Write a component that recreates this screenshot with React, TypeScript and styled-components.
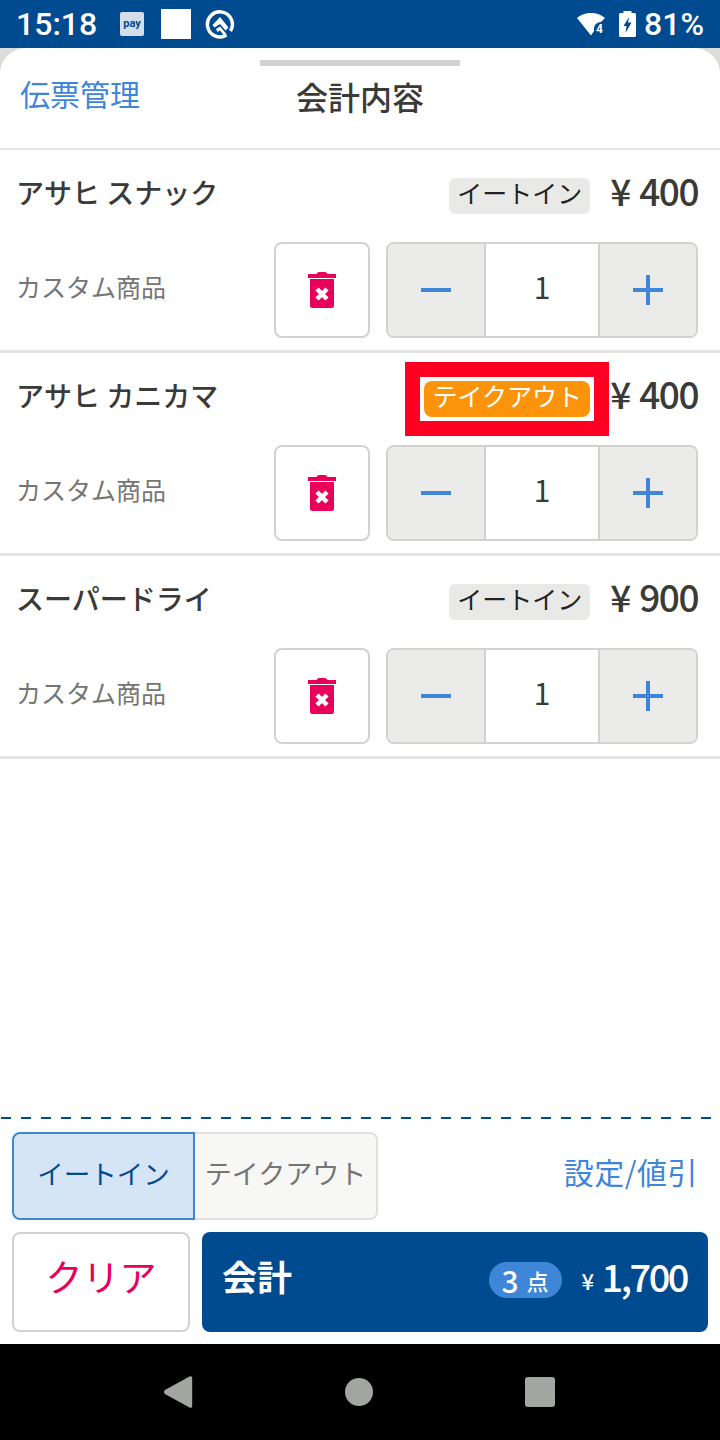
import styled, { createGlobalStyle } from 'styled-components';

const NAVY = '#004a8f';
const BLUE = '#3f85d8';
const PINK = '#e8005a';
const LINE = '#d2d3d1';
const INK = '#3a3a38';

const items = [
  { name: 'アサヒ スナック', type: 'eatin', price: '400' },
  { name: 'アサヒ カニカマ', type: 'takeout', price: '400' },
  { name: 'スーパードライ', type: 'eatin', price: '900' },
];

const GlobalStyle = createGlobalStyle`
  html, body {
    margin: 0;
    padding: 0;
    background: #000;
  }
  * {
    box-sizing: border-box;
  }
`;

const App = () => {
  return (
    <>
      <GlobalStyle />
      <Page>
        <StatusBar>
          <StatusLeft>
            <Clock>15:18</Clock>
            <PayIcon>pay</PayIcon>
            <WhiteSquare />
            <svg width="30" height="30" viewBox="0 0 30 30" fill="none">
              <path d="M21.500 26A12.500 12.500 0 1 1 25.500 22" stroke="#fff" strokeWidth="3.500" />
              <path d="M15 8l8.500 10.500-3 3L15 15l-5.500 3.500L7.500 16z" fill="#fff" />
              <path d="M11 20l4-2.500 6.500 7.500-2.500 1.500-4-5-2.500 1.500z" fill="#fff" />
            </svg>
          </StatusLeft>
          <StatusRight>
            <svg width="30" height="28" viewBox="0 0 30 28">
              <path d="M1 8C5 4.500 9.500 3 15 3s10 1.500 14 5l-4 4c-4 0-7 3-7 7v2l-3 4.500z" fill="#fff" />
              <text x="20" y="22.500" fill="#fff" fontSize="12" fontWeight="700" fontFamily="Roboto, sans-serif">4</text>
            </svg>
            <svg width="17" height="26" viewBox="0 0 17 26">
              <path d="M4.500 0h8v2h3a1.500 1.500 0 0 1 1.500 1.500V24.500a1.500 1.500 0 0 1-1.500 1.500H1.500A1.500 1.500 0 0 1 0 24.500V3.500A1.500 1.500 0 0 1 1.500 2h3z" fill="#fff" />
              <path d="M10 6L4.500 15h3l-1 7 6-10.500H9z" fill={NAVY} />
            </svg>
            <Battery>81%</Battery>
          </StatusRight>
        </StatusBar>
        <Backdrop>
          <Sheet>
            <Handle />
            <Header>
              <BackLink>伝票管理</BackLink>
              <Title>会計内容</Title>
            </Header>
            {items.map((item) => (
              <ItemRow key={item.name}>
                <ItemTop>
                  <ItemName>{item.name}</ItemName>
                  <ItemRight>
                    {item.type === 'takeout' ? (
                      <Highlight>
                        <TakeoutBadge>テイクアウト</TakeoutBadge>
                      </Highlight>
                    ) : (
                      <EatinBadge>イートイン</EatinBadge>
                    )}
                    <Price>
                      <Yen>¥</Yen>
                      {item.price}
                    </Price>
                  </ItemRight>
                </ItemTop>
                <ItemBottom>
                  <ItemNote>カスタム商品</ItemNote>
                  <DeleteButton>
                    <svg width="28" height="36" viewBox="0 0 28 36">
                      <path d="M0 2h8.500C9 .7 10 0 11.500 0h5C18 0 19 .7 19.500 2H28v4H0z" fill={PINK} />
                      <path d="M2 7h24v26.500a2.500 2.500 0 0 1-2.500 2.500h-19A2.500 2.500 0 0 1 2 33.500z" fill={PINK} />
                      <path d="M9 17l10 10M19 17L9 27" stroke="#fff" strokeWidth="4.500" />
                    </svg>
                  </DeleteButton>
                  <Stepper>
                    <StepButton>
                      <svg width="30" height="4" viewBox="0 0 30 4">
                        <rect width="30" height="4" fill={BLUE} />
                      </svg>
                    </StepButton>
                    <Quantity>1</Quantity>
                    <StepButton>
                      <svg width="30" height="30" viewBox="0 0 30 30">
                        <path d="M0 13h30v4H0zM13 0h4v30h-4z" fill={BLUE} />
                      </svg>
                    </StepButton>
                  </Stepper>
                </ItemBottom>
              </ItemRow>
            ))}
            <Spacer />
            <DashedLine />
            <Footer>
              <OptionRow>
                <Segment>
                  <SegmentOn>イートイン</SegmentOn>
                  <SegmentOff>テイクアウト</SegmentOff>
                </Segment>
                <SettingLink>設定/値引</SettingLink>
              </OptionRow>
              <ActionRow>
                <ClearButton>クリア</ClearButton>
                <PayButton>
                  <PayLabel>会計</PayLabel>
                  <PayRight>
                    <CountPill>
                      3<CountUnit>点</CountUnit>
                    </CountPill>
                    <TotalYen>¥</TotalYen>
                    <Total>1,700</Total>
                  </PayRight>
                </PayButton>
              </ActionRow>
            </Footer>
          </Sheet>
        </Backdrop>
        <NavBar>
          <svg width="29" height="32" viewBox="0 0 29 32">
            <path d="M1 14L25.500.6c1.500-.8 2.700 0 2.700 1.500v27.800c0 1.500-1.200 2.300-2.700 1.500L1 18c-1.300-.9-1.300-3.100 0-4z" fill="#a3a5a1" />
          </svg>
          <svg width="28" height="28" viewBox="0 0 28 28">
            <circle cx="14" cy="14" r="14" fill="#a3a5a1" />
          </svg>
          <svg width="30" height="30" viewBox="0 0 30 30">
            <rect width="30" height="30" rx="3" fill="#a3a5a1" />
          </svg>
        </NavBar>
      </Page>
    </>
  );
};

const Page = styled.div`
  width: 720px;
  height: 1440px;
  display: flex;
  flex-direction: column;
  font-family: 'Noto Sans CJK JP', 'Noto Sans', sans-serif;
  overflow: hidden;
`;

const StatusBar = styled.div`
  height: 48px;
  padding: 0 16px;
  display: flex;
  align-items: center;
  justify-content: space-between;
  background: ${NAVY};
  color: #fff;
  font-family: Roboto, sans-serif;
`;

const StatusLeft = styled.div`
  display: flex;
  align-items: center;
`;

const Clock = styled.div`
  width: 104px;
  font-size: 32px;
  font-weight: 500;
  line-height: 48px;
`;

const PayIcon = styled.div`
  width: 24px;
  height: 24px;
  border-radius: 2px;
  background: #d3deea;
  color: ${NAVY};
  font-size: 11px;
  font-weight: 700;
  line-height: 24px;
  text-align: center;
`;

const WhiteSquare = styled.div`
  width: 30px;
  height: 30px;
  margin: 0 14px 0 17px;
  background: #fff;
`;

const StatusRight = styled.div`
  display: flex;
  align-items: center;
  gap: 13px;
`;

const Battery = styled.div`
  margin-left: -5px;
  font-size: 32px;
  font-weight: 500;
  line-height: 48px;
`;

const Backdrop = styled.div`
  height: 1296px;
  background: #dcdcda;
`;

const Sheet = styled.div`
  position: relative;
  height: 100%;
  display: flex;
  flex-direction: column;
  background: #fff;
  border-radius: 26px 26px 0 0;
`;

const Handle = styled.div`
  position: absolute;
  top: 12px;
  left: 260px;
  width: 200px;
  height: 6px;
  background: ${LINE};
`;

const Header = styled.div`
  position: relative;
  height: 102px;
  flex-shrink: 0;
  border-bottom: 2px solid #e4e5e3;
  display: flex;
  justify-content: center;
  padding-top: 25px;
`;

const BackLink = styled.div`
  position: absolute;
  left: 20px;
  top: 23px;
  font-size: 30px;
  line-height: 44px;
  color: ${BLUE};
`;

const Title = styled.div`
  font-size: 32px;
  font-weight: 500;
  line-height: 46px;
  color: ${INK};
`;

const ItemRow = styled.div`
  height: 203px;
  flex-shrink: 0;
  padding: 0 22px 0 16px;
  border-bottom: 3px solid #e4e5e3;
`;

const ItemTop = styled.div`
  height: 92px;
  display: flex;
  align-items: center;
  justify-content: space-between;
`;

const ItemName = styled.div`
  margin-bottom: 8px;
  font-size: 28px;
  font-weight: 500;
  color: ${INK};
  white-space: nowrap;
`;

const ItemRight = styled.div`
  display: flex;
  align-items: center;
  gap: 20px;
`;

const EatinBadge = styled.div`
  height: 36px;
  padding: 0 8px;
  border-radius: 6px;
  background: #e9eae8;
  color: #222;
  font-size: 25px;
  line-height: 29px;
  white-space: nowrap;
`;

const Highlight = styled.div`
  margin: -19px -19px -19px 0;
  padding: 4px;
  background: #fff;
  border: 15px solid #ff0022;
  position: relative;
`;

const TakeoutBadge = styled.div`
  height: 36px;
  width: 166px;
  border-radius: 8px;
  background: #fb940a;
  color: #fff;
  font-size: 25px;
  line-height: 29px;
  text-align: center;
  white-space: nowrap;
`;

const Price = styled.div`
  margin-bottom: 12px;
  display: flex;
  align-items: baseline;
  font-size: 37px;
  font-weight: 500;
  line-height: 48px;
  letter-spacing: -1.5px;
  color: ${INK};
  white-space: nowrap;
`;

const Yen = styled.span`
  width: 29px;
  letter-spacing: 0;
`;

const ItemBottom = styled.div`
  display: flex;
  align-items: center;
`;

const ItemNote = styled.div`
  width: 258px;
  margin-bottom: 8px;
  font-size: 25px;
  color: #757674;
  white-space: nowrap;
`;

const DeleteButton = styled.div`
  width: 96px;
  height: 96px;
  margin-right: 16px;
  display: flex;
  align-items: center;
  justify-content: center;
  border: 2px solid ${LINE};
  border-radius: 8px;
  background: #fff;
`;

const Stepper = styled.div`
  width: 312px;
  height: 96px;
  display: grid;
  grid-template-columns: 96px 1fr 96px;
  border: 2px solid ${LINE};
  border-radius: 8px;
  overflow: hidden;
`;

const StepButton = styled.div`
  display: flex;
  align-items: center;
  justify-content: center;
  background: #ebecea;
`;

const Quantity = styled.div`
  border-left: 2px solid ${LINE};
  border-right: 2px solid ${LINE};
  background: #fff;
  color: ${INK};
  font-size: 30px;
  line-height: 84px;
  text-align: center;
`;

const Spacer = styled.div`
  flex: 1;
`;

const DashedLine = styled.div`
  height: 2px;
  flex-shrink: 0;
  background: repeating-linear-gradient(to right, ${NAVY} 0 10px, transparent 10px 20px) 1px 0;
`;

const Footer = styled.div`
  height: 225px;
  flex-shrink: 0;
  padding: 13px 12px 12px;
  display: flex;
  flex-direction: column;
  gap: 12px;
`;

const OptionRow = styled.div`
  height: 88px;
  display: flex;
  align-items: center;
  justify-content: space-between;
  padding-right: 10px;
`;

const Segment = styled.div`
  width: 366px;
  height: 88px;
  display: flex;
`;

const SegmentOn = styled.div`
  width: 183px;
  border: 2px solid ${BLUE};
  border-radius: 8px 0 0 8px;
  background: #d5e5f5;
  color: ${NAVY};
  font-size: 26.500px;
  line-height: 78px;
  text-align: center;
`;

const SegmentOff = styled.div`
  flex: 1;
  border: 2px solid #e0e1df;
  border-left: 0;
  border-radius: 0 8px 8px 0;
  background: #f7f8f6;
  color: #757674;
  font-size: 27px;
  line-height: 78px;
  text-align: center;
  white-space: nowrap;
`;

const SettingLink = styled.div`
  margin-bottom: 10px;
  font-size: 30px;
  color: ${BLUE};
  letter-spacing: 0.5px;
`;

const ActionRow = styled.div`
  height: 100px;
  display: flex;
  gap: 12px;
`;

const ClearButton = styled.div`
  width: 178px;
  border: 2px solid ${LINE};
  border-radius: 8px;
  background: #fff;
  color: ${PINK};
  font-size: 37px;
  line-height: 84px;
  text-align: center;
`;

const PayButton = styled.div`
  flex: 1;
  padding: 0 21px 0 20px;
  display: flex;
  align-items: center;
  justify-content: space-between;
  border-radius: 8px;
  background: ${NAVY};
  color: #fff;
`;

const PayLabel = styled.div`
  margin-bottom: 14px;
  font-size: 35px;
  font-weight: 700;
`;

const PayRight = styled.div`
  display: flex;
  align-items: center;
  height: 60px;
`;

const CountPill = styled.div`
  width: 73px;
  height: 36px;
  margin: 0 20px 4px 0;
  display: flex;
  align-items: center;
  justify-content: center;
  gap: 8px;
  border-radius: 18px;
  background: ${BLUE};
  font-size: 30px;
  font-weight: 500;
  line-height: 32px;
`;

const CountUnit = styled.span`
  font-size: 22px;
`;

const TotalYen = styled.span`
  width: 20px;
  font-size: 22px;
  font-weight: 500;
  margin-bottom: 4px;
`;

const Total = styled.span`
  margin-bottom: 14px;
  font-size: 38px;
  font-weight: 500;
  letter-spacing: -2.500px;
`;

const NavBar = styled.div`
  height: 96px;
  flex-shrink: 0;
  padding: 0 165px 0 164px;
  display: flex;
  align-items: center;
  justify-content: space-between;
  background: #000;
`;

export default App;
